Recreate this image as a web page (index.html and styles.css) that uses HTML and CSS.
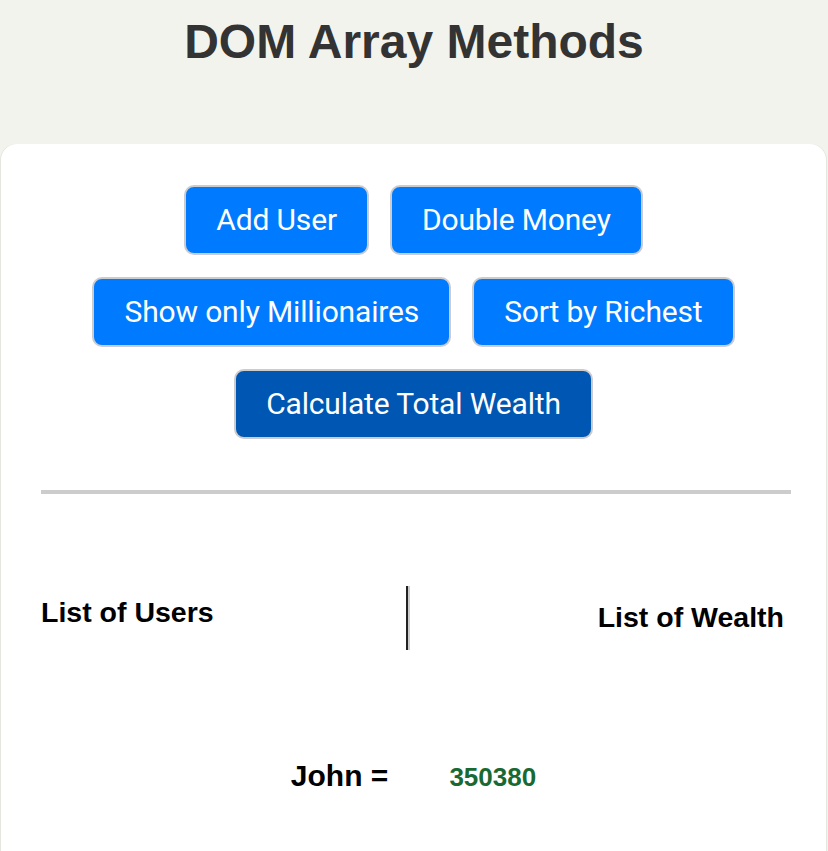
FILE: index.html
```html
<!DOCTYPE html>
<html lang="en">
<head>
<meta charset="utf-8">
<title>DOM Array Methods</title>
<link rel="stylesheet" href="styles.css">
</head>
<body>
  <h1 class="title">DOM Array Methods</h1>
  <main class="card">
    <div class="actions">
      <div class="row">
        <button class="btn">Add User</button>
        <button class="btn">Double Money</button>
      </div>
      <div class="row">
        <button class="btn">Show only Millionaires</button>
        <button class="btn">Sort by Richest</button>
      </div>
      <div class="row">
        <button class="btn btn-dark">Calculate Total Wealth</button>
      </div>
    </div>
    <hr class="rule">
    <div class="lists">
      <h3 class="list-head list-users">List of Users</h3>
      <div class="divider"></div>
      <h3 class="list-head list-wealth">List of Wealth</h3>
    </div>
    <div class="person">
      <span class="name">John =</span>
      <span class="money">350380</span>
    </div>
  </main>
</body>
</html>
```
FILE: styles.css
```css
html, body {
  margin: 0;
  padding: 0;
}
body {
  background: #f3f3ee;
  font-family: "Liberation Sans", Arial, sans-serif;
  overflow: hidden;
}
.title {
  margin: 0;
  padding-top: 14px;
  font-size: 48px;
  line-height: 56px;
  font-weight: bold;
  color: #333333;
  text-align: center;
}
.card {
  margin: 74px 2px 0 1px;
  background: #ffffff;
  border-radius: 16px 16px 0 0;
  padding: 41px 0 60px;
  min-height: 800px;
  box-shadow: -1px 0 0 #e6e6e0, 1px 0 0 #e6e6e0;
}
.actions {
  display: flex;
  flex-direction: column;
  gap: 22px;
}
.row {
  display: flex;
  justify-content: center;
  gap: 21px;
}
.btn {
  font-family: Roboto, "Liberation Sans", sans-serif;
  font-size: 30px;
  line-height: 34px;
  font-weight: 400;
  letter-spacing: -0.15px;
  color: #ffffff;
  background: #007bff;
  border: 2px solid #cccccc;
  border-radius: 10px;
  padding: 16px 30px;
  margin: 0;
}
.btn-dark {
  background: #0056b3;
}
.rule {
  margin: 51px 35px 0 40px;
  border: 0;
  height: 4px;
  background: #cccccc;
}
.lists {
  display: flex;
  align-items: flex-start;
  margin: 92px 42px 0 40px;
  height: 64px;
}
.list-head {
  margin: 0;
  font-size: 28.5px;
  line-height: 32px;
  font-weight: bold;
  color: #000000;
}
.list-users {
  flex: 0 0 365px;
  padding-top: 10px;
}
.divider {
  width: 2px;
  height: 64px;
  background: #222222;
  box-shadow: 2px 0 0 #cccccc;
}
.list-wealth {
  flex: 1;
  text-align: right;
  padding-top: 15px;
}
.person {
  display: flex;
  justify-content: center;
  align-items: baseline;
  gap: 61px;
  margin-top: 108px;
}
.name {
  font-size: 30px;
  line-height: 36px;
  font-weight: bold;
  color: #000000;
}
.money {
  font-size: 26px;
  font-weight: bold;
  color: #186932;
}
```
